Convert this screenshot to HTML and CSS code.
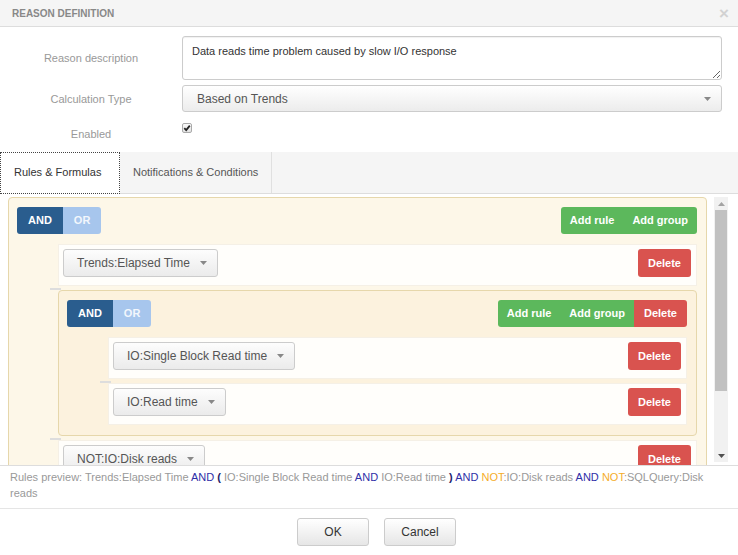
FILE: index.html
```html
<!DOCTYPE html>
<html>
<head>
<meta charset="utf-8">
<link rel="stylesheet" href="styles.css">
</head>
<body>
<div class="modal">
  <div class="modal-header">
    <span class="title">REASON DEFINITION</span>
    <span class="close">×</span>
  </div>

  <div class="form">
    <div class="label">Reason description</div>
    <textarea class="desc">Data reads time problem caused by slow I/O response</textarea>
    <div class="label">Calculation Type</div>
    <div class="select-lg"><span>Based on Trends</span><svg class="caret" width="7" height="4" viewBox="0 0 7 4"><polygon points="0,0 7,0 3.5,4" fill="#888"/></svg></div>
    <div class="label label-enabled">Enabled</div>
    <div class="check-cell"><span class="check"><svg width="8" height="8" viewBox="0 0 8 8"><path d="M1.3 4.2 L3.2 6.1 L6.8 1.6" stroke="#222" stroke-width="1.8" fill="none"/></svg></span></div>
  </div>

  <div class="tabs">
    <div class="tab active">Rules &amp; Formulas</div>
    <div class="tab">Notifications &amp; Conditions</div>
  </div>

  <div class="rules-area">
    <div class="rules-scroll">
      <div class="group">
        <div class="group-header">
          <div class="btn-group"><span class="btn and">AND</span><span class="btn or">OR</span></div>
          <div class="btn-group"><span class="btn green">Add rule</span><span class="btn green">Add group</span></div>
        </div>
        <ul class="rules-list">
          <li class="rule">
            <div class="rule-select"><span>Trends:Elapsed Time</span><svg class="caret" width="7" height="4" viewBox="0 0 7 4"><polygon points="0,0 7,0 3.5,4" fill="#888"/></svg></div>
            <span class="btn red solo">Delete</span>
          </li>
          <li class="group inner">
            <div class="group-header">
              <div class="btn-group"><span class="btn and">AND</span><span class="btn or">OR</span></div>
              <div class="btn-group"><span class="btn green">Add rule</span><span class="btn green">Add group</span><span class="btn red">Delete</span></div>
            </div>
            <ul class="rules-list">
              <li class="rule">
                <div class="rule-select"><span>IO:Single Block Read time</span><svg class="caret" width="7" height="4" viewBox="0 0 7 4"><polygon points="0,0 7,0 3.5,4" fill="#888"/></svg></div>
                <span class="btn red solo">Delete</span>
              </li>
              <li class="rule">
                <div class="rule-select"><span>IO:Read time</span><svg class="caret" width="7" height="4" viewBox="0 0 7 4"><polygon points="0,0 7,0 3.5,4" fill="#888"/></svg></div>
                <span class="btn red solo">Delete</span>
              </li>
            </ul>
          </li>
          <li class="rule">
            <div class="rule-select"><span>NOT:IO:Disk reads</span><svg class="caret" width="7" height="4" viewBox="0 0 7 4"><polygon points="0,0 7,0 3.5,4" fill="#888"/></svg></div>
            <span class="btn red solo">Delete</span>
          </li>
        </ul>
      </div>
    </div>
    <div class="scrollbar">
      <div class="sb-arrow"><svg width="7" height="4" viewBox="0 0 7 4"><polygon points="0,4 7,4 3.5,0" fill="#a3a3a3"/></svg></div>
      <div class="sb-thumb"></div>
      <div class="sb-space"></div>
      <div class="sb-arrow"><svg width="7" height="4" viewBox="0 0 7 4"><polygon points="0,0 7,0 3.5,4" fill="#505050"/></svg></div>
    </div>
  </div>

  <div class="preview">Rules preview: Trends:Elapsed Time <span class="op">AND</span> <span class="par">(</span> IO:Single Block Read time <span class="op">AND</span> IO:Read time <span class="par">)</span> <span class="op">AND</span> <span class="not">NOT</span>:IO:Disk reads <span class="op">AND</span> <span class="not">NOT</span>:SQLQuery:Disk reads</div>

  <div class="footer">
    <span class="fbtn">OK</span>
    <span class="fbtn">Cancel</span>
  </div>
</div>
</body>
</html>
```
FILE: styles.css
```css
* { box-sizing: border-box; }
body {
  margin: 0;
  background: #fff;
  font-family: "Liberation Sans", Arial, sans-serif;
}
.modal {
  width: 738px;
  height: 555px;
  overflow: hidden;
  background: #fff;
}
.modal-header {
  height: 27px;
  background: #f5f5f5;
  border-bottom: 1px solid #ddd;
  display: flex;
  align-items: center;
  justify-content: space-between;
  padding: 0 9px 0 12px;
}
.title {
  font-size: 10px;
  font-weight: bold;
  color: #888;
}
.close {
  font-size: 17px;
  font-weight: bold;
  color: #d2d2d2;
  line-height: 1;
}

/* form */
.form {
  display: grid;
  grid-template-columns: 182px 540px;
  grid-template-rows: 44px 27px 35px;
  row-gap: 5px;
  padding-top: 9px;
  height: 125px;
}
.label {
  font-size: 11px;
  color: #999;
  text-align: center;
  align-self: center;
}
.label-enabled {
  align-self: start;
  padding-top: 11px;
  line-height: 13px;
}
.desc {
  display: block;
  width: 540px;
  height: 44px;
  margin: 0;
  border: 1px solid #ccc;
  border-radius: 3px;
  padding: 7px 9px;
  font-family: "Liberation Sans", Arial, sans-serif;
  font-size: 11px;
  line-height: 14px;
  color: #333;
  box-shadow: inset 0 1px 1px rgba(0,0,0,.06);
  resize: both;
}
.select-lg {
  height: 27px;
  border: 1px solid #ccc;
  border-radius: 3px;
  background: linear-gradient(#ffffff, #ececec);
  display: flex;
  align-items: center;
  justify-content: space-between;
  padding: 0 10px 0 14px;
  font-size: 12px;
  color: #555;
}
.check-cell { padding-top: 6px; }
.check {
  display: flex;
  align-items: center;
  justify-content: center;
  width: 10px;
  height: 10px;
  border: 1px solid #aaa;
  border-radius: 2px;
  background: linear-gradient(#fafafa, #e2e2e2);
}

/* tabs */
.tabs {
  display: flex;
  align-items: flex-start;
  height: 42px;
  background: #f5f5f5;
  border-bottom: 1px solid #ddd;
}
.tab {
  height: 41px;
  line-height: 41px;
  font-size: 11px;
  color: #555;
  padding: 0 13px;
  border-right: 1px solid #e0e0e0;
}
.tab.active {
  height: 42px;
  background: #fff;
  color: #333;
  padding: 0 15px 0 14px;
  width: 120px;
  border-right: 1px dotted #444;
  outline: 1px dotted #444;
  outline-offset: -1px;
}

/* rules area */
.rules-area {
  display: flex;
  height: 271px;
}
.rules-scroll {
  flex: 1;
  overflow: hidden;
  padding: 3px 7px 0 8px;
}
.scrollbar {
  width: 14px;
  margin: 3px 10px 3px 0;
  background: #f1f1f1;
  display: flex;
  flex-direction: column;
  align-items: center;
}
.sb-arrow {
  height: 13px;
  display: flex;
  align-items: center;
  justify-content: center;
}
.sb-thumb {
  width: 12px;
  height: 181px;
  background: #c1c1c1;
}
.sb-space { flex: 1; }

.group {
  border: 1px solid #e6d7ab;
  border-radius: 4px;
  background: #fdf7e8;
  padding: 9px 9px 6px 8px;
}
.group.inner { background: #fcf2de; }
.group-header {
  display: flex;
  justify-content: space-between;
  margin-bottom: 10px;
}
.btn-group {
  display: flex;
  border-radius: 3px;
  overflow: hidden;
}
.btn {
  height: 27px;
  line-height: 27px;
  padding: 0 10px;
  font-size: 11px;
  font-weight: bold;
  color: #fff;
}
.and { background: #2a5d8e; padding: 0 11px; }
.or { background: #a7c6ed; color: #f2f6fc; padding: 0 11px; }
.green { background: #5cb85c; padding: 0 9px; }
.red { background: #d9534f; }
.btn.solo {
  height: 28px;
  line-height: 28px;
  border-radius: 3px;
  padding: 0 10px;
}

.rules-list {
  list-style: none;
  margin: 0;
  padding: 0 0 0 41px;
}
.rules-list > li {
  position: relative;
  margin: 4px 0;
}
.rules-list > li + li::before {
  content: "";
  position: absolute;
  left: -9px;
  top: -3px;
  width: 11px;
  height: 2px;
  background: #ddd;
}
.rule {
  display: flex;
  justify-content: space-between;
  align-items: flex-start;
  background: #fffefb;
  border: 1px solid #f5f0e6;
  padding: 4px 5px 8px 4px;
}
.rule-select {
  height: 28px;
  display: flex;
  align-items: center;
  gap: 10px;
  padding: 0 10px 0 13px;
  border: 1px solid #ccc;
  border-radius: 3px;
  background: linear-gradient(#fdfdfd, #ebebeb);
  font-size: 12px;
  color: #555;
}

/* preview */
.preview {
  height: 43px;
  border-top: 1px solid #ddd;
  padding: 3px 30px 7px 10px;
  font-size: 11px;
  line-height: 16px;
  color: #999;
}
.op { color: #2f2fa8; }
.par { color: #1d1d6a; font-weight: bold; }
.not { color: #f5ad2a; }

/* footer */
.footer {
  border-top: 1px solid #e5e5e5;
  display: flex;
  justify-content: center;
  gap: 15px;
  padding: 9px 0 0 15px;
}
.fbtn {
  width: 72px;
  height: 28px;
  border: 1px solid #ccc;
  border-radius: 3px;
  background: linear-gradient(#ffffff, #e6e6e6);
  font-size: 12px;
  color: #333;
  display: flex;
  align-items: center;
  justify-content: center;
}
```
